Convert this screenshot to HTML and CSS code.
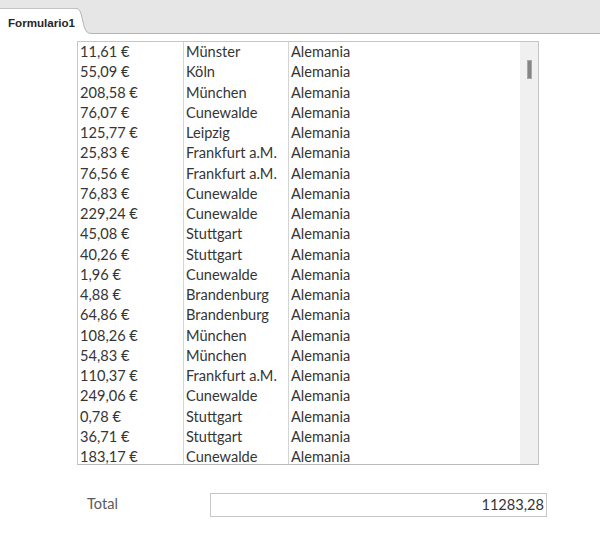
FILE: index.html
```html
<!DOCTYPE html>
<html lang="es">
<head>
<meta charset="utf-8">
<title>Formulario1</title>
<link rel="stylesheet" href="styles.css">
</head>
<body>
<div class="tabbar">
  <div class="tab">Formulario1</div>
  <svg class="tab-curve" width="17" height="34" viewBox="0 0 17 34">
    <path d="M0 8 L0 34 L17 34 L17 33.5 L16 33.5 C10 33.5 9 30 7 22 C5 13 4 8.5 0 8.5 Z" fill="#ffffff"/>
    <path d="M0 8.5 C4 8.5 5 13 7 22 C9 30 10 33.5 16 33.5 L17 33.5" fill="none" stroke="#b4b4b4" stroke-width="1"/>
  </svg>
  <div class="tab-fill"></div>
</div>
<div class="form">
  <div class="listbox">
    <div class="rows">
      <div class="row"><span>11,61 €</span><span>Münster</span><span>Alemania</span></div>
      <div class="row"><span>55,09 €</span><span>Köln</span><span>Alemania</span></div>
      <div class="row"><span>208,58 €</span><span>München</span><span>Alemania</span></div>
      <div class="row"><span>76,07 €</span><span>Cunewalde</span><span>Alemania</span></div>
      <div class="row"><span>125,77 €</span><span>Leipzig</span><span>Alemania</span></div>
      <div class="row"><span>25,83 €</span><span>Frankfurt a.M.</span><span>Alemania</span></div>
      <div class="row"><span>76,56 €</span><span>Frankfurt a.M.</span><span>Alemania</span></div>
      <div class="row"><span>76,83 €</span><span>Cunewalde</span><span>Alemania</span></div>
      <div class="row"><span>229,24 €</span><span>Cunewalde</span><span>Alemania</span></div>
      <div class="row"><span>45,08 €</span><span>Stuttgart</span><span>Alemania</span></div>
      <div class="row"><span>40,26 €</span><span>Stuttgart</span><span>Alemania</span></div>
      <div class="row"><span>1,96 €</span><span>Cunewalde</span><span>Alemania</span></div>
      <div class="row"><span>4,88 €</span><span>Brandenburg</span><span>Alemania</span></div>
      <div class="row"><span>64,86 €</span><span>Brandenburg</span><span>Alemania</span></div>
      <div class="row"><span>108,26 €</span><span>München</span><span>Alemania</span></div>
      <div class="row"><span>54,83 €</span><span>München</span><span>Alemania</span></div>
      <div class="row"><span>110,37 €</span><span>Frankfurt a.M.</span><span>Alemania</span></div>
      <div class="row"><span>249,06 €</span><span>Cunewalde</span><span>Alemania</span></div>
      <div class="row"><span>0,78 €</span><span>Stuttgart</span><span>Alemania</span></div>
      <div class="row"><span>36,71 €</span><span>Stuttgart</span><span>Alemania</span></div>
      <div class="row"><span>183,17 €</span><span>Cunewalde</span><span>Alemania</span></div>
    </div>
    <div class="scrollbar"><div class="thumb"></div></div>
  </div>
  <div class="total">
    <div class="total-label">Total</div>
    <div class="total-box">11283,28</div>
  </div>
</div>
</body>
</html>
```
FILE: styles.css
```css
html, body {
  margin: 0;
  padding: 0;
  background: #ffffff;
}
body {
  width: 600px;
  height: 539px;
  overflow: hidden;
  font-family: Lato, "Liberation Sans", sans-serif;
}
.tabbar {
  display: flex;
  height: 34px;
  background: #e6e6e6;
}
.tab {
  width: 76px;
  flex: none;
  margin-top: 8px;
  background: #ffffff;
  border-top: 1px solid #c4c4c4;
  box-sizing: border-box;
  padding: 7px 0 0 8px;
  font-family: "Liberation Sans", sans-serif;
  font-weight: bold;
  font-size: 11.6px;
  color: #262626;
  white-space: nowrap;
}
.tab-curve {
  display: block;
  flex: none;
}
.tab-fill {
  flex: 1;
  border-bottom: 1px solid #b4b4b4;
  box-sizing: border-box;
}
.form {
  padding-top: 7px;
}
.listbox {
  margin-left: 77px;
  width: 462px;
  height: 424px;
  box-sizing: border-box;
  border: 1px solid #c6c6c6;
  border-bottom-color: #bcbcbc;
  display: flex;
}
.rows {
  flex: 1;
  display: flex;
  flex-direction: column;
  background:
    linear-gradient(#d4d4d4, #d4d4d4) 105px 0 / 1px 100% no-repeat,
    linear-gradient(#d4d4d4, #d4d4d4) 210px 0 / 1px 100% no-repeat;
}
.row {
  display: grid;
  grid-template-columns: 106px 105px 1fr;
  height: 20.25px;
  flex: none;
  font-size: 14.6px;
  line-height: 19.5px;
  color: #353535;
}
.row span {
  padding-left: 2px;
  white-space: nowrap;
}
.scrollbar {
  width: 18px;
  flex: none;
  background: #f0f0f0;
  display: flex;
  justify-content: center;
  padding-top: 18px;
  box-sizing: border-box;
}
.thumb {
  width: 5px;
  height: 19px;
  background: #858585;
  border: 1px solid #a8a8a8;
  box-sizing: border-box;
}
.total {
  display: grid;
  grid-template-columns: 123px 337px;
  align-items: center;
  margin-top: 28px;
  padding-left: 87px;
}
.total-label {
  font-size: 14.6px;
  color: #5a5a5a;
  padding-bottom: 3px;
}
.total-box {
  height: 24px;
  box-sizing: border-box;
  border: 1px solid #c6c6c6;
  text-align: right;
  padding-right: 2px;
  font-size: 14.6px;
  line-height: 22px;
  color: #353535;
}
```
